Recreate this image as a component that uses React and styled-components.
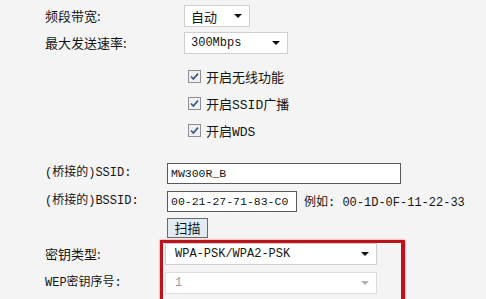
import React from 'react'
import styled, { createGlobalStyle } from 'styled-components'

const GlobalStyle = createGlobalStyle`
  html, body {
    margin: 0;
    padding: 0;
    background: #f4f4f4;
  }
  body {
    width: 486px;
    height: 299px;
    overflow: hidden;
    color: #141414;
    font-family: "Liberation Mono", "Noto Sans CJK SC", monospace;
  }
`

const Page = styled.div`
  padding: 5px 0 0 45px;
`

const Section = styled.div`
  display: grid;
  grid-template-columns: ${({ $label }) => $label}px 1fr;
  row-gap: ${({ $gap }) => $gap}px;
  align-items: center;
  margin-top: ${({ $top }) => $top || 0}px;
`

const Label = styled.div`
  font-family: "Noto Sans CJK SC", sans-serif;
  font-size: 13px;
  line-height: 22px;
  height: 22px;
  white-space: nowrap;
  ${({ $mono }) => $mono && `
    font-family: "Liberation Mono", "Noto Sans CJK SC", monospace;
    font-size: 12px;
  `}
`

const Select = styled.div`
  box-sizing: border-box;
  display: flex;
  align-items: center;
  justify-content: space-between;
  width: ${({ $w }) => $w}px;
  height: 22px;
  padding: 0 6px 0 ${({ $pad }) => $pad || 6}px;
  background: #fff;
  border: 1px solid ${({ $disabled }) => ($disabled ? '#dcdcdc' : '#cfcfcf')};
  font-size: ${({ $cjk }) => ($cjk ? 13 : 12)}px;
  font-family: ${({ $cjk }) => ($cjk ? '"Noto Sans CJK SC", sans-serif' : '"Liberation Mono", monospace')};
  color: ${({ $disabled }) => ($disabled ? '#9a9a9a' : '#141414')};
`

const Arrow = styled.span`
  width: 0;
  height: 0;
  border-left: 4px solid transparent;
  border-right: 4px solid transparent;
  border-top: 4px solid ${({ $disabled }) => ($disabled ? '#b0b0b0' : '#111')};
  margin-right: 1px;
`

const CheckList = styled.div`
  grid-column: 2;
  display: flex;
  flex-direction: column;
  padding-left: 4px;
  margin-top: 4px;
`

const CheckRow = styled.label`
  display: flex;
  align-items: center;
  gap: 5px;
  height: 27px;
  font-family: "Liberation Mono", "Noto Sans CJK SC", monospace;
  font-size: 13px;
`

const TextInput = styled.div`
  box-sizing: border-box;
  width: ${({ $w }) => $w}px;
  height: 21px;
  padding: 0 3px;
  border: 1px solid #5a5a5a;
  background: #fff;
  font-size: 11.5px;
  line-height: 19px;
  white-space: nowrap;
  overflow: hidden;
`

const Inline = styled.div`
  display: flex;
  align-items: center;
  gap: 7px;
`

const Hint = styled.span`
  font-size: 12px;
  white-space: nowrap;
`

const ScanButton = styled.button`
  box-sizing: border-box;
  width: 41px;
  height: 20px;
  padding: 0;
  border: 1px solid #6a6a6a;
  background: #e2eaf2;
  font-family: "Noto Sans CJK SC", sans-serif;
  font-size: 13px;
  line-height: 18px;
  color: #141414;
`

const KeySection = styled.div`
  display: grid;
  grid-template-columns: 115px 245px;
  margin-top: 2px;
`

const LabelColumn = styled.div`
  display: flex;
  flex-direction: column;
  gap: 7px;
  padding-top: 3px;
`

const RedBox = styled.div`
  box-sizing: border-box;
  display: flex;
  flex-direction: column;
  gap: 7px;
  padding: 0 0 12px 2px;
  border: 3px solid #be111b;
  border-right-width: 4px;
  box-shadow: 0 0 2px rgba(200, 20, 30, 0.6);
`

const CheckBox = () => (
  <svg width="13" height="13" viewBox="0 0 13 13">
    <rect x="0.5" y="0.5" width="12" height="12" fill="#eef0f3" stroke="#8d8f94" />
    <path d="M3 6.5 L5.3 9 L10 3.6" fill="none" stroke="#3a5677" strokeWidth="1.6" />
  </svg>
)

const checks = ['开启无线功能', '开启SSID广播', '开启WDS']

export default function App() {
  return (
    <Page>
      <GlobalStyle />
      <Section $label={139} $gap={5}>
        <Label>频段带宽:</Label>
        <Select $w={66} $cjk>
          自动
          <Arrow />
        </Select>
        <Label>最大发送速率:</Label>
        <Select $w={104}>
          300Mbps
          <Arrow />
        </Select>
        <CheckList>
          {checks.map((c) => (
            <CheckRow key={c}>
              <CheckBox />
              {c}
            </CheckRow>
          ))}
        </CheckList>
      </Section>

      <Section $label={122} $gap={6} $top={18}>
        <Label $mono>(桥接的)SSID:</Label>
        <TextInput $w={234}>MW300R_B</TextInput>
        <Label $mono>(桥接的)BSSID:</Label>
        <Inline>
          <TextInput $w={130}>00-21-27-71-83-C0</TextInput>
          <Hint>例如: 00-1D-0F-11-22-33</Hint>
        </Inline>
        <span />
        <ScanButton>扫描</ScanButton>
      </Section>

      <KeySection>
        <LabelColumn>
          <Label>密钥类型:</Label>
          <Label $mono>WEP密钥序号:</Label>
        </LabelColumn>
        <RedBox>
          <Select $w={212} $pad={9}>
            WPA-PSK/WPA2-PSK
            <Arrow />
          </Select>
          <Select $w={212} $pad={9} $disabled>
            1
            <Arrow $disabled />
          </Select>
        </RedBox>
      </KeySection>
    </Page>
  )
}
